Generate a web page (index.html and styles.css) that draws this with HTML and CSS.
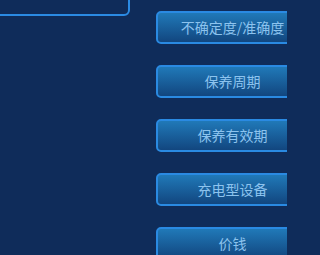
FILE: index.html
```html
<!DOCTYPE html>
<html lang="zh">
<head>
<meta charset="utf-8">
<link rel="stylesheet" href="styles.css">
</head>
<body>
<div class="page">
  <div class="panel"></div>
  <div class="menu">
    <div class="btn">不确定度/准确度</div>
    <div class="btn">保养周期</div>
    <div class="btn">保养有效期</div>
    <div class="btn">充电型设备</div>
    <div class="btn">价钱</div>
  </div>
</div>
</body>
</html>
```
FILE: styles.css
```css
html, body {
  margin: 0;
  padding: 0;
  background: #0f2c5a;
}
.page {
  display: flex;
  align-items: flex-start;
  width: 287px;
  height: 255px;
  overflow: hidden;
  font-family: "Noto Sans CJK SC", "Noto Sans", sans-serif;
}
.panel {
  flex: none;
  box-sizing: border-box;
  width: 141px;
  height: 46px;
  margin-left: -11px;
  margin-top: -30px;
  border: 2px solid #2b8be3;
  border-radius: 6px;
}
.menu {
  flex: none;
  display: flex;
  flex-direction: column;
  gap: 21px;
  margin-left: 26px;
  padding-top: 11px;
}
.btn {
  box-sizing: border-box;
  width: 153px;
  height: 33px;
  border: 2px solid #2a8ae2;
  border-radius: 5px;
  background: linear-gradient(to bottom, #2079b8, #12467f);
  color: #8cc3ee;
  font-size: 14px;
  line-height: 29px;
  text-align: center;
}
```
